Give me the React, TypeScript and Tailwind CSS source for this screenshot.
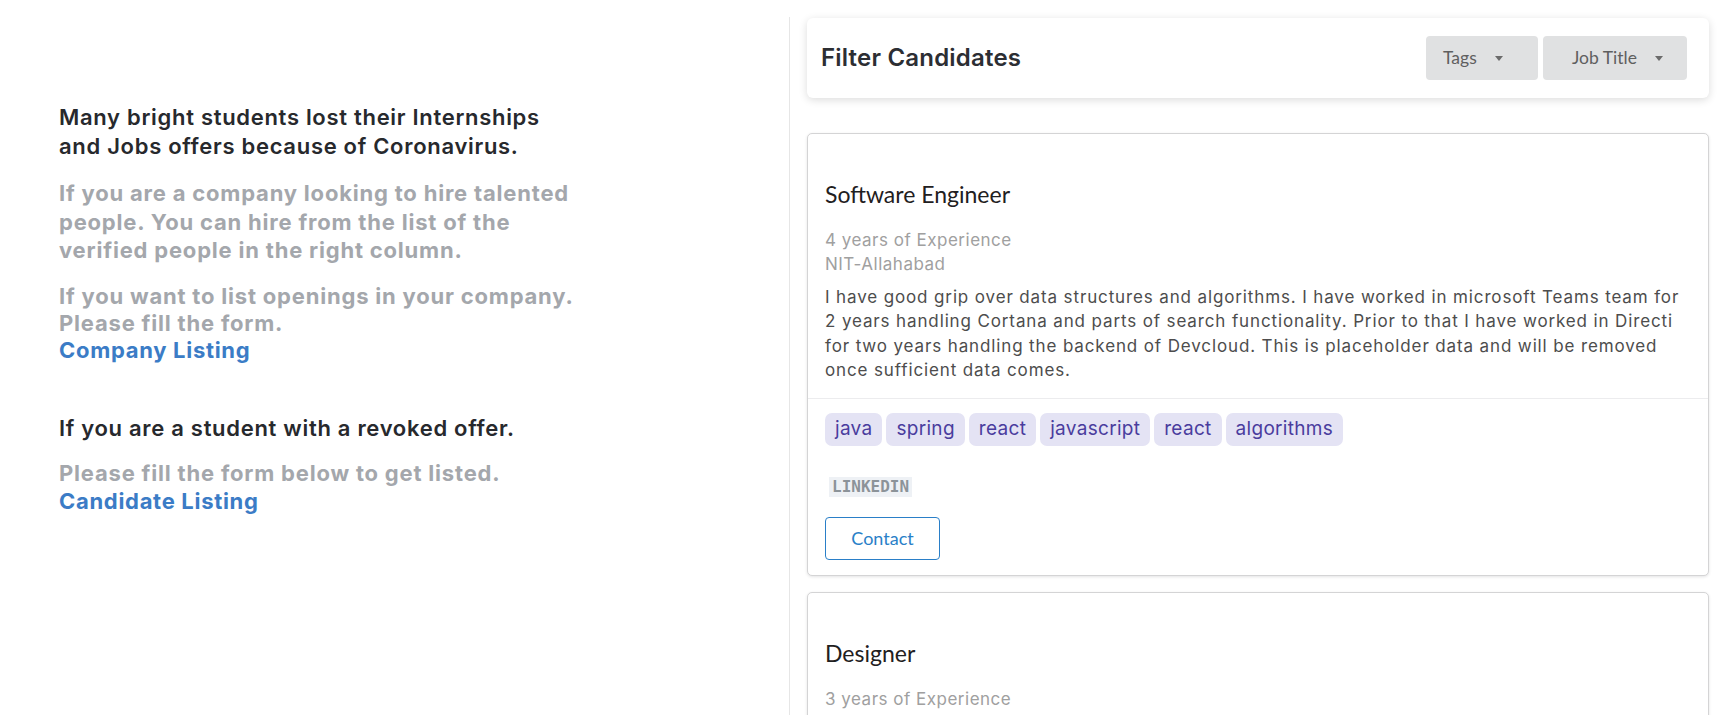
interface Candidate {
  id: number
  title: string
  experience: string
  college?: string
  about?: string[]
  tags?: string[]
}

const candidates: Candidate[] = [
  {
    id: 1,
    title: 'Software Engineer',
    experience: '4 years of Experience',
    college: 'NIT-Allahabad',
    // lines kept as in the design
    about: [
      'I have good grip over data structures and algorithms. I have worked in microsoft Teams team for',
      '2 years handling Cortana and parts of search functionality. Prior to that I have worked in Directi',
      'for two years handling the backend of Devcloud. This is placeholder data and will be removed',
      'once sufficient data comes.',
    ],
    tags: ['java', 'spring', 'react', 'javascript', 'react', 'algorithms'],
  },
  {
    id: 2,
    title: 'Designer',
    experience: '3 years of Experience',
  },
]

const body = "font-['Inter',sans-serif]"
const lato = "font-['Lato',sans-serif]"

function Caret() {
  return (
    <svg width="8" height="5" viewBox="0 0 8 5" className="ml-[18px] shrink-0">
      <path d="M0 0 L8 0 L4 5 Z" fill="#6b6b6b" />
    </svg>
  )
}

function CandidateCard({ c }: { c: Candidate }) {
  return (
    <div className="bg-white border border-[#d4d4d5] rounded-[5px] shadow-[0_1px_3px_0_rgba(34,36,38,0.12)]">
      <div className="px-[17px] pt-[46px] pb-[16px]">
        <h2 className={`${lato} text-[23px] leading-[28px] text-[#1f2021]`}>{c.title}</h2>
        <div className={`${body} mt-[20px] text-[17px] leading-[24px] text-[#a0a0a0] tracking-[0.5px]`}>
          <p>{c.experience}</p>
          {c.college && <p>{c.college}</p>}
        </div>
        {c.about && (
          <p className={`${body} mt-[9px] text-[17px] leading-[24.3px] text-[#4d4d4d] tracking-[0.87px] whitespace-nowrap`}>
            {c.about.map((line, i) => (
              <span key={i}>
                {line}
                {i < c.about!.length - 1 && <br />}
              </span>
            ))}
          </p>
        )}
      </div>
      {c.tags && (
        <div className="border-t border-[#ececee] px-[17px] pt-[14px] pb-[15px]">
          <div className="flex flex-wrap gap-[4px]">
            {c.tags.map((t, i) => (
              <span
                key={i}
                className={`${body} h-[33px] px-[10px] flex items-center rounded-[7px] bg-[#e4e3f4] text-[#4a3d9e] text-[19px] tracking-[0.3px]`}
              >
                {t}
              </span>
            ))}
          </div>
          <div className="mt-[28px]">
            <span className="ml-[4px] inline-block px-[3px] bg-[#eef1f5] font-['DejaVu_Sans_Mono',monospace] font-bold text-[16px] leading-[20px] text-[#8c9399]">
              LINKEDIN
            </span>
          </div>
          <button
            className={`${lato} mt-[19px] w-[115px] h-[43px] rounded-[4px] border border-[#2a7fc8] text-[#2a7fc8] text-[18px] bg-white`}
          >
            Contact
          </button>
        </div>
      )}
    </div>
  )
}

export default function App() {
  return (
    <div className="w-[1733px] h-[715px] overflow-hidden bg-white flex pt-[17px]">
      {/* left column */}
      <div className={`${body} w-[789px] shrink-0 pl-[59px] pt-[86px] text-[22px] tracking-[0.7px]`}>
        <h1 className="leading-[29px] font-semibold text-[#27292d]">
          Many bright students lost their Internships
          <br />
          and Jobs offers because of Coronavirus.
        </h1>
        <p className="mt-[18px] leading-[28.5px] font-bold text-[#a4a7ac] tracking-[0.8px]">
          If you are a company looking to hire talented
          <br />
          people. You can hire from the list of the
          <br />
          verified people in the right column.
        </p>
        <p className="mt-[18px] leading-[27px] font-bold text-[#a4a7ac] tracking-[0.8px]">
          If you want to list openings in your company.
          <br />
          Please fill the form.
        </p>
        <a href="#" className="block leading-[27px] font-bold text-[#3b7cc6]">
          Company Listing
        </a>
        <h3 className="mt-[50px] leading-[28px] font-semibold text-[#27292d]">
          If you are a student with a revoked offer.
        </h3>
        <p className="mt-[17px] leading-[28px] font-bold text-[#a4a7ac] tracking-[0.8px]">
          Please fill the form below to get listed.
        </p>
        <a href="#" className="block leading-[28px] font-bold text-[#3b7cc6]">
          Candidate Listing
        </a>
      </div>

      {/* right column */}
      <div className="flex-1 border-l border-[#e6e6e6] pl-[17px] pr-[24px]">
        <div className="mt-px h-[80px] bg-white rounded-[6px] shadow-[0_2px_8px_0_rgba(0,0,0,0.14)] flex items-center justify-between pl-[14px] pr-[22px]">
          <h2 className={`${body} text-[24px] font-semibold text-[#2c2e33] tracking-[0.2px]`}>Filter Candidates</h2>
          <div className="flex gap-[5px]">
            <button
              className={`${lato} w-[112px] h-[44px] rounded-[4px] bg-[#e0e1e2] text-[#5f5f5f] text-[17.5px] flex items-center pl-[17px]`}
            >
              Tags
              <Caret />
            </button>
            <button
              className={`${lato} w-[144px] h-[44px] rounded-[4px] bg-[#e0e1e2] text-[#5f5f5f] text-[17.5px] flex items-center pl-[29px]`}
            >
              Job Title
              <Caret />
            </button>
          </div>
        </div>

        <div className="mt-[35px] flex flex-col gap-[16px]">
          {candidates.map(c => (
            <div key={c.id} className={c.tags ? '' : 'min-h-[300px]'}>
              <CandidateCard c={c} />
            </div>
          ))}
        </div>
      </div>
    </div>
  )
}
